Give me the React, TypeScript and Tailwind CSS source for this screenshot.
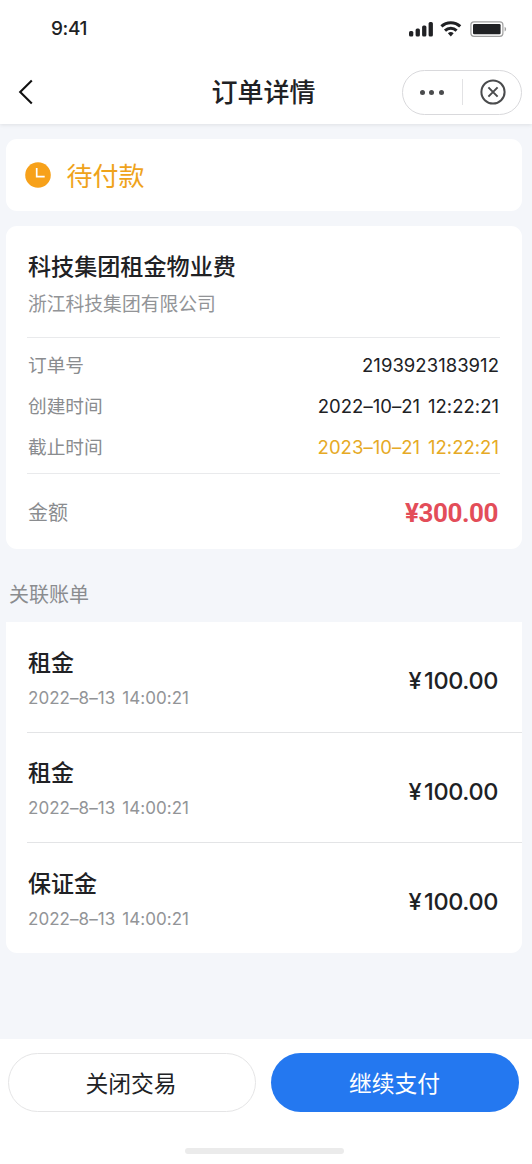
import { ReactNode } from "react";

const bills = [
  { name: "租金", time: "2022–8–13 14:00:21", amount: "100.00" },
  { name: "租金", time: "2022–8–13 14:00:21", amount: "100.00" },
  { name: "保证金", time: "2022–8–13 14:00:21", amount: "100.00" },
];

function StatusBar() {
  return (
    <div className="flex h-[58px] items-center justify-between pr-[25px] pl-[51px]">
      <span className="font-['Inter'] text-[19px] font-medium tracking-[-0.4px] text-[#202124]">9:41</span>
      <svg width="98" height="16" viewBox="0 0 98 16" fill="none">
        {/* Signal */}
        <g fill="#202124">
          <rect x="0" y="10" width="4.3" height="5.6" rx="1.5" />
          <rect x="6.6" y="7.6" width="4.3" height="8" rx="1.5" />
          <rect x="13.1" y="4.6" width="4.3" height="11" rx="1.5" />
          <rect x="19.6" y="1" width="4.3" height="14.6" rx="1.5" />
        </g>
        {/* Wifi */}
        <g stroke="#202124" strokeWidth="3">
          <path d="M32.4 5.4a13.6 13.6 0 0 1 18.8 0" />
          <path d="M36 9.6a8.4 8.4 0 0 1 11.6 0" />
        </g>
        <path d="M38.9 12.3a4.6 4.6 0 0 1 5.8 0L41.8 15.4z" fill="#202124" />
        {/* Battery */}
        <rect x="61.9" y="0.9" width="32" height="14.4" rx="3" stroke="#a0a0a0" strokeWidth="1.2" />
        <rect x="64" y="3" width="27.6" height="10.2" rx="1.2" fill="#202124" />
        <path d="M95.6 5.8c2 .8 2 3.8 0 4.6z" fill="#a0a0a0" />
      </svg>
    </div>
  );
}

function NavBar() {
  return (
    <div className="grid h-[66px] grid-cols-[193.5px_auto_1fr] items-center pt-[2px] pr-[10.5px] pl-[18px]">
      <svg width="16" height="26" viewBox="0 0 16 26" fill="none" stroke="#111" strokeWidth="2.1">
        <path d="M13.8 1.6 2.2 13l11.6 11.6" />
      </svg>
      <h1 className="pt-[2px] text-[26px] leading-none font-medium text-[#202124]">订单详情</h1>
      <div className="flex h-[45px] w-[120px] items-center justify-self-end rounded-full border border-[#d9d9dc]">
        <div className="flex w-[59px] items-center justify-center gap-[4.5px] pr-px">
          <i className="size-[5px] rounded-full bg-[#4a4b4d]" />
          <i className="size-[5px] rounded-full bg-[#4a4b4d]" />
          <i className="size-[5px] rounded-full bg-[#4a4b4d]" />
        </div>
        <div className="h-[26px] w-px bg-[#e2e2e4]" />
        <div className="flex flex-1 justify-center pl-[2px]">
          <svg width="26" height="26" viewBox="0 0 26 26" fill="none" stroke="#4a4b4d" strokeWidth="2">
            <circle cx="13" cy="13" r="11.6" />
            <path d="m8.4 8.4 9.2 9.2m0-9.2-9.2 9.2" />
          </svg>
        </div>
      </div>
    </div>
  );
}

function Row({ label, children }: { label: string; children: ReactNode }) {
  return (
    <div className="flex h-[40.7px] items-center justify-between">
      <span className="pl-px text-[18.7px] text-[#8a8c8f]">{label}</span>
      <span className="pr-px font-['Inter'] text-[18.5px] tracking-[0.03px] [word-spacing:2.6px]">{children}</span>
    </div>
  );
}

export default function App() {
  return (
    <div className="flex h-[1164px] w-[532px] flex-col bg-[#f4f6fa] font-['Liberation_Sans','Noto_Sans_CJK_SC',sans-serif] text-[#202124]">
      <header className="bg-white shadow-[0_1px_4px_rgba(0,0,0,0.09)]">
        <StatusBar />
        <NavBar />
      </header>

      <main className="flex-1 pr-[10px] pl-[6px]">
        {/* Order status */}
        <section className="mt-[15px] flex h-[72px] items-center rounded-[11px] bg-white pl-[18.5px]">
          <svg width="26" height="26" viewBox="0 0 26 26" fill="none">
            <circle cx="13" cy="13" r="12.8" fill="#f7a11a" />
            <path d="M11.7 6v8.6h8" stroke="#fff" strokeWidth="1.7" />
          </svg>
          <span className="ml-4 pt-[3px] text-[26px] leading-none text-[#efa31b]">待付款</span>
        </section>

        {/* Order details */}
        <section className="mt-[15px] h-[323px] rounded-[11px] bg-white pr-[22px] pl-[21px]">
          <div className="flex h-[111px] flex-col pt-[27px] pl-px">
            <h2 className="text-[23.1px] leading-[28px] font-medium">科技集团租金物业费</h2>
            <p className="mt-[10px] text-[18.8px] leading-[28px] text-[#929497]">浙江科技集团有限公司</p>
          </div>
          <div className="h-[137px] border-y border-[#e9eaec] pt-[8px]">
            <Row label="订单号">2193923183912</Row>
            <Row label="创建时间">2022–10–21 12:22:21</Row>
            <Row label="截止时间">
              <span className="text-[#e6aa25]">2023–10–21 12:22:21</span>
            </Row>
          </div>
          <div className="flex h-[75px] items-center justify-between pt-[3px]">
            <span className="pl-px text-[20px] text-[#8a8c8f]">金额</span>
            <span className="pr-[2px] font-['Roboto',sans-serif] text-[26px] font-bold tracking-[-0.45px] text-[#e34d59]">
              ¥300.00
            </span>
          </div>
        </section>

        {/* Related bills */}
        <h3 className="flex h-[73px] items-center pt-[18px] pl-[3px] text-[20px] text-[#8a8c8f]">关联账单</h3>
        <ul className="h-[331px] rounded-b-[11px] bg-white pl-[21px]">
          {bills.map((bill, i) => (
            <li
              key={i}
              className="flex h-[110.4px] items-center justify-between border-b border-[#e3e4e6] pr-[24px] first:h-[111px] last:border-b-0"
            >
              <div className="pt-[2px] pl-px">
                <div className="text-[23px] leading-[32px] font-medium">{bill.name}</div>
                <div className="mt-[7px] font-['Inter'] text-[17px] leading-[24px] tracking-[0.05px] [word-spacing:2.2px] text-[#929497]">
                  {bill.time}
                </div>
              </div>
              <div className="flex gap-[3px] pt-[7px] font-['Inter'] text-[23.5px] font-medium tracking-[-0.4px]">
                <span>¥</span>
                <span>{bill.amount}</span>
              </div>
            </li>
          ))}
        </ul>
      </main>

      <footer className="flex h-[125px] flex-col bg-white pt-[14px]">
        <div className="flex w-full gap-[15px] pl-[8px] text-[22.8px]">
          <button className="h-[59px] w-[248px] rounded-full border border-[#e5e5e6] pt-[3px] pr-[2px]">关闭交易</button>
          <button className="h-[59px] w-[248px] rounded-full bg-[#2478f0] pt-[3px] pr-px text-white">继续支付</button>
        </div>
        <div className="mt-[36px] ml-[185px] h-[6px] w-[159px] rounded-full bg-[#ebebeb]" />
      </footer>
    </div>
  );
}
